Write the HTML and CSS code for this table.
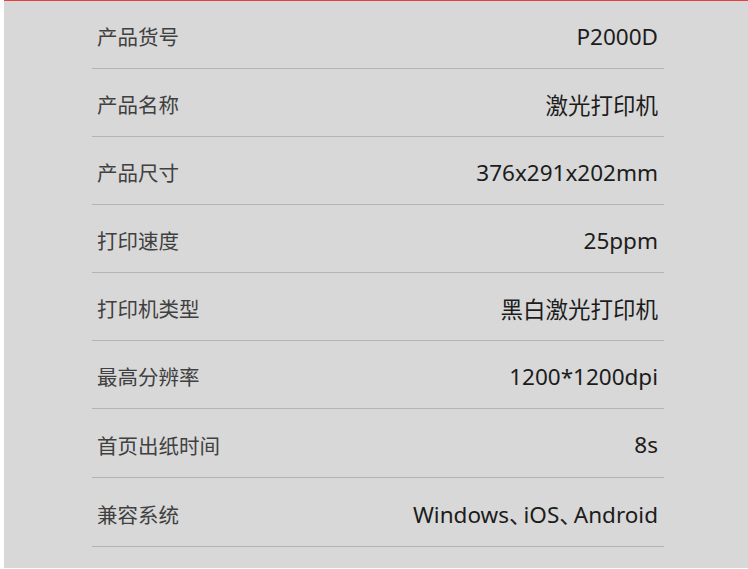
FILE: index.html
```html
<!DOCTYPE html>
<html lang="zh">
<head>
<meta charset="utf-8">
<link rel="stylesheet" href="styles.css">
</head>
<body>
<div class="page">
  <div class="specs">
    <div class="row"><span class="label">产品货号</span><span class="value">P2000D</span></div>
    <div class="row"><span class="label">产品名称</span><span class="value">激光打印机</span></div>
    <div class="row"><span class="label">产品尺寸</span><span class="value">376x291x202mm</span></div>
    <div class="row"><span class="label">打印速度</span><span class="value">25ppm</span></div>
    <div class="row"><span class="label">打印机类型</span><span class="value">黑白激光打印机</span></div>
    <div class="row"><span class="label">最高分辨率</span><span class="value">1200*1200dpi</span></div>
    <div class="row"><span class="label">首页出纸时间</span><span class="value">8s</span></div>
    <div class="row"><span class="label">兼容系统</span><span class="value">Windows<span class="sep">、</span>iOS<span class="sep">、</span>Android</span></div>
  </div>
</div>
</body>
</html>
```
FILE: styles.css
```css
html, body {
  margin: 0;
  padding: 0;
  background: #ffffff;
}
.page {
  margin-left: 4px;
  height: 567px;
  border-top: 1px solid #e8403f;
  background: #d8d8d8;
}
.specs {
  padding: 0 84px 0 88px;
  display: flex;
  flex-direction: column;
}
.row {
  box-sizing: border-box;
  height: 68px;
  border-bottom: 1px solid #b4b4b4;
  display: flex;
  justify-content: space-between;
  align-items: center;
  padding: 3px 6px 0 5px;
}
.row:nth-child(n+7) {
  height: 69px;
}
.label {
  font-family: "Noto Sans CJK SC", "Noto Sans", sans-serif;
  font-size: 20.5px;
  color: #404040;
}
.value {
  font-family: "Noto Sans", "Noto Sans CJK SC", sans-serif;
  font-size: 22.5px;
  color: #1c1c1c;
  white-space: nowrap;
}
.sep {
  letter-spacing: -8px;
}
```
